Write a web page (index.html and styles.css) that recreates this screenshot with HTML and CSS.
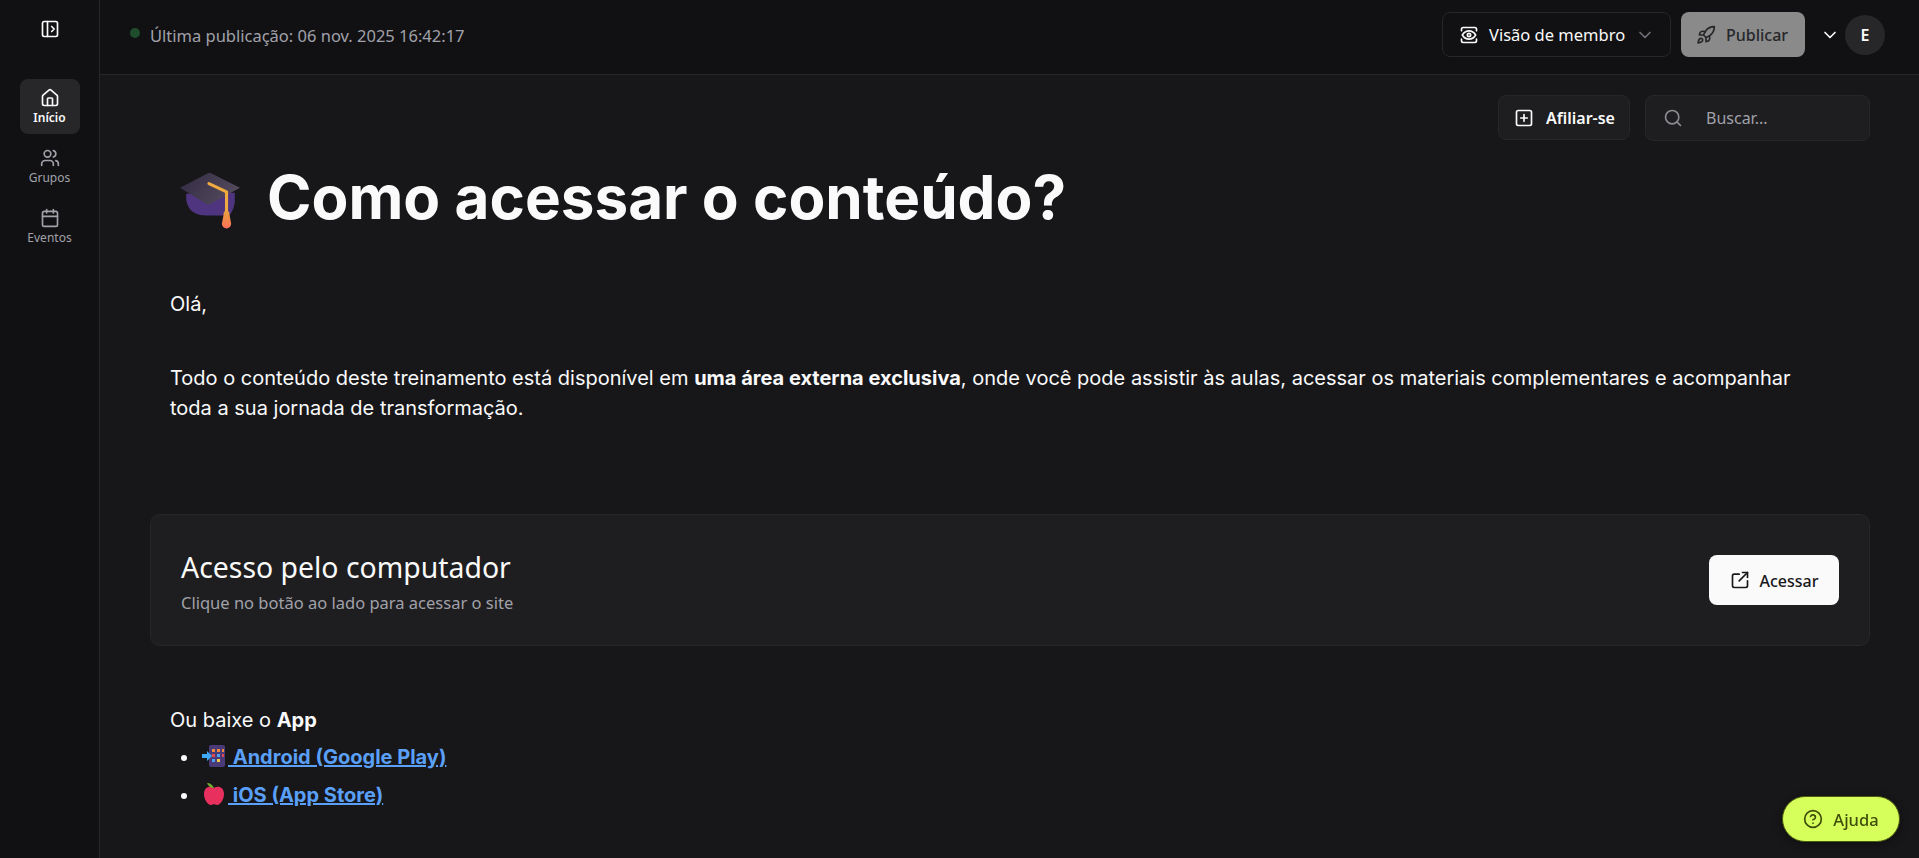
FILE: index.html
```html
<!DOCTYPE html>
<html lang="pt-BR">
<head>
  <meta charset="UTF-8">
  <title>Como acessar o conteúdo?</title>
  <link rel="stylesheet" href="styles.css">
</head>
<body>
  <div class="app">
    <aside class="sidebar">
      <button class="toggle" aria-label="Abrir menu">
        <svg class="icon" viewBox="0 0 24 24"><rect x="3" y="3" width="18" height="18" rx="2"/><path d="M9 3v18"/><path d="m14 9 3 3-3 3"/></svg>
      </button>
      <nav class="nav">
        <a class="nav-item active">
          <svg class="icon" viewBox="0 0 24 24"><path d="M15 21v-8a1 1 0 0 0-1-1h-4a1 1 0 0 0-1 1v8"/><path d="M3 10a2 2 0 0 1 .709-1.528l7-5.999a2 2 0 0 1 2.582 0l7 5.999A2 2 0 0 1 21 10v9a2 2 0 0 1-2 2H5a2 2 0 0 1-2-2z"/></svg>
          <span>Início</span>
        </a>
        <a class="nav-item">
          <svg class="icon" viewBox="0 0 24 24"><path d="M16 21v-2a4 4 0 0 0-4-4H6a4 4 0 0 0-4 4v2"/><circle cx="9" cy="7" r="4"/><path d="M22 21v-2a4 4 0 0 0-3-3.87"/><path d="M16 3.13a4 4 0 0 1 0 7.75"/></svg>
          <span>Grupos</span>
        </a>
        <a class="nav-item">
          <svg class="icon" viewBox="0 0 24 24"><path d="M8 2v4"/><path d="M16 2v4"/><rect x="3" y="4" width="18" height="18" rx="2"/><path d="M3 10h18"/></svg>
          <span>Eventos</span>
        </a>
      </nav>
    </aside>

    <div class="page">
      <header class="topbar">
        <div class="status">
          <span class="status-dot"></span>
          <span>Última publicação: 06 nov. 2025 16:42:17</span>
        </div>
        <div class="top-actions">
          <button class="btn-view">
            <svg class="icon" viewBox="0 0 24 24"><path d="M3 7V5a2 2 0 0 1 2-2h14a2 2 0 0 1 2 2v2"/><path d="M3 17v2a2 2 0 0 0 2 2h14a2 2 0 0 0 2-2v-2"/><path d="M4 12s3-5 8-5 8 5 8 5-3 5-8 5-8-5-8-5z"/><circle cx="12" cy="12" r="2"/></svg>
            <span>Visão de membro</span>
            <svg class="icon chevron-dim" viewBox="0 0 24 24"><path d="m6 9 6 6 6-6"/></svg>
          </button>
          <button class="btn-publish">
            <svg class="icon" viewBox="0 0 24 24"><path d="M4.500 16.500c-1.500 1.260-2 5-2 5s3.740-.5 5-2c.71-.84.7-2.130-.09-2.910a2.180 2.180 0 0 0-2.910-.09z"/><path d="m12 15-3-3a22 22 0 0 1 2-3.950A12.880 12.880 0 0 1 22 2c0 2.720-.78 7.500-6 11a22.350 22.350 0 0 1-4 2z"/><path d="M9 12H4s.55-3.030 2-4c1.620-1.080 5 0 5 0"/><path d="M12 15v5s3.030-.55 4-2c1.080-1.620 0-5 0-5"/></svg>
            <span>Publicar</span>
          </button>
          <svg class="icon chevron" viewBox="0 0 24 24"><path d="m6 9 6 6 6-6"/></svg>
          <div class="avatar">E</div>
        </div>
      </header>

      <main class="content">
        <div class="tools">
          <button class="btn-join">
            <svg class="icon" viewBox="0 0 24 24"><rect x="3" y="3" width="18" height="18" rx="2"/><path d="M8 12h8"/><path d="M12 8v8"/></svg>
            <span>Afiliar-se</span>
          </button>
          <div class="search">
            <svg class="icon" viewBox="0 0 24 24"><circle cx="11" cy="11" r="8"/><path d="m21 21-4.300-4.300"/></svg>
            <span>Buscar...</span>
          </div>
        </div>

        <h1 class="title">
          <svg class="cap" viewBox="0 0 60 60">
            <defs>
              <linearGradient id="capTop" x1="0" y1="0" x2="1" y2="0.4">
                <stop offset="0" stop-color="#322a42"/>
                <stop offset="1" stop-color="#52495c"/>
              </linearGradient>
              <linearGradient id="tassel" x1="0" y1="0" x2="0" y2="1">
                <stop offset="0" stop-color="#e8a03c"/>
                <stop offset="1" stop-color="#fb6f5c"/>
              </linearGradient>
            </defs>
            <path d="M7 26v6c2 11 9 15 20 15h22c3-5 5-9 5-15v-7z" fill="#4f3580"/>
            <path d="M1 20 28 6a3 3 0 0 1 3 0l28 14-29 16a3 3 0 0 1-3 0z" fill="url(#capTop)"/>
            <path d="M29 16l17 8v19" fill="none" stroke="#eeaa40" stroke-width="3" stroke-linecap="round" stroke-linejoin="round"/>
            <path d="M43.500 43h5l.5 4 1.500 8a4.500 4.500 0 0 1-9 0l1.500-8z" fill="url(#tassel)"/>
          </svg>
          <span>Como acessar o conteúdo?</span>
        </h1>

        <div class="text">
          <p class="hello">Olá,</p>
          <p class="intro">Todo o conteúdo deste treinamento está disponível em <strong>uma área externa exclusiva</strong>, onde você pode assistir às aulas, acessar os materiais complementares e acompanhar toda a sua jornada de transformação.</p>
        </div>

        <section class="card">
          <div>
            <h2>Acesso pelo computador</h2>
            <p>Clique no botão ao lado para acessar o site</p>
          </div>
          <button class="btn-access">
            <svg class="icon" viewBox="0 0 24 24"><path d="M21 13v6a2 2 0 0 1-2 2H5a2 2 0 0 1-2-2V7a2 2 0 0 1 2-2h6"/><path d="m11 13 10-10"/><path d="M15 3h6v6"/></svg>
            <span>Acessar</span>
          </button>
        </section>

        <div class="text app-links">
          <p>Ou baixe o <strong>App</strong></p>
          <ul>
            <li><a href="#"><svg class="emoji" viewBox="0 0 24 24"><rect x="7" y="1" width="16" height="22" rx="2" fill="#4b3a78"/><path d="M10 5h3v3h-3zM15 5h3v3h-3zM20 5h2v3h-2z" fill="#f0883e"/><path d="M10 10h3v3h-3zM20 10h2v3h-2z" fill="#e5484d"/><path d="M15 10h3v3h-3zM10 15h3v3h-3z" fill="#4ea1f3"/><path d="M15 15h3v3h-3z" fill="#f2c744"/><path d="M0 10h5V7l5 5-5 5v-3H0z" fill="#3fa9f5"/></svg> Android (Google Play)</a></li>
            <li><a href="#"><svg class="emoji" viewBox="0 0 24 24"><path d="M12 6C8 3 2 5 2 12c0 6 4 11 7 11 1.500 0 2-.7 3-.7s1.500.7 3 .7c3 0 7-5 7-11 0-7-6-9-10-6z" fill="#e8305f"/><path d="M12 6C11 3 8 1 5 1c1 3 4 5 7 5z" fill="#6cae2e"/></svg> iOS (App Store)</a></li>
          </ul>
        </div>
      </main>
    </div>
  </div>

  <button class="btn-help">
    <svg class="icon" viewBox="0 0 24 24"><circle cx="12" cy="12" r="10"/><path d="M9.090 9a3 3 0 0 1 5.830 1c0 2-3 3-3 3"/><path d="M12 17h.01"/></svg>
    <span>Ajuda</span>
  </button>
</body>
</html>
```

FILE: styles.css
```css
* {
  box-sizing: border-box;
}

html, body {
  height: 100%;
}

body {
  margin: 0;
  overflow: hidden;
  background: #17171a;
  color: #fafafa;
  font-family: "Noto Sans", sans-serif;
}

button {
  font-family: inherit;
  cursor: pointer;
  white-space: nowrap;
}

.icon {
  width: 20px;
  height: 20px;
  flex: none;
  fill: none;
  stroke: currentColor;
  stroke-width: 2;
  stroke-linecap: round;
  stroke-linejoin: round;
}

.app {
  display: flex;
  height: 100%;
}

/* sidebar */
.sidebar {
  width: 100px;
  flex: none;
  background: #111113;
  border-right: 1px solid #27272a;
  display: flex;
  flex-direction: column;
  align-items: center;
}

.toggle {
  margin-top: 19px;
  width: 20px;
  height: 20px;
  padding: 0;
  background: none;
  border: none;
  color: #fafafa;
}

.nav {
  margin-top: 40px;
  display: flex;
  flex-direction: column;
  gap: 5px;
}

.nav-item {
  width: 60px;
  height: 55px;
  padding-top: 9px;
  border-radius: 8px;
  display: flex;
  flex-direction: column;
  align-items: center;
  gap: 2px;
  font-size: 12px;
  line-height: 16px;
  color: #a1a1aa;
}

.nav-item.active {
  background: #27272a;
  color: #fafafa;
  font-weight: 600;
}

/* top bar */
.page {
  flex: 1;
  min-width: 0;
  display: flex;
  flex-direction: column;
}

.topbar {
  height: 75px;
  flex: none;
  background: #111113;
  border-bottom: 1px solid #27272a;
  padding: 0 34px 5px 30px;
  display: flex;
  align-items: center;
  justify-content: space-between;
}

.status {
  display: flex;
  align-items: center;
  gap: 10px;
  margin-top: 2px;
  font-size: 16.500px;
  color: #a1a1aa;
}

.status-dot {
  width: 10px;
  height: 10px;
  margin-top: -5px;
  border-radius: 50%;
  background: #1f4d2e;
}

.top-actions {
  display: flex;
  align-items: center;
}

.btn-view {
  width: 229px;
  height: 45px;
  padding: 0 16px;
  background: #111113;
  border: 1px solid #27272a;
  border-radius: 8px;
  color: #fafafa;
  font-size: 16.500px;
  display: flex;
  align-items: center;
  gap: 10px;
}

.chevron-dim {
  color: #71717a;
}

.btn-publish {
  width: 124px;
  height: 45px;
  margin-left: 10px;
  padding: 0 15px;
  background: #8a8a8a;
  border: none;
  border-radius: 8px;
  color: #27272a;
  font-size: 16px;
  font-weight: 500;
  display: flex;
  align-items: center;
  gap: 10px;
}

.chevron {
  margin-left: 15px;
  color: #fafafa;
}

.avatar {
  width: 40px;
  height: 40px;
  margin-left: 5px;
  border-radius: 50%;
  background: #27272a;
  display: flex;
  align-items: center;
  justify-content: center;
  font-size: 16px;
  font-weight: 600;
}

/* content */
.content {
  flex: 1;
  min-height: 0;
  padding: 20px 49px 0 50px;
}

.tools {
  display: flex;
  justify-content: flex-end;
  gap: 15px;
}

.btn-join {
  width: 132px;
  height: 45px;
  padding: 0 15px;
  background: #1e1e20;
  border: 1px solid #27272a;
  border-radius: 8px;
  color: #fafafa;
  font-size: 16px;
  font-weight: 600;
  display: flex;
  align-items: center;
  gap: 12px;
}

.search {
  width: 225px;
  height: 46px;
  padding: 0 17px;
  background: #1e1e20;
  border: 1px solid #27272a;
  border-radius: 8px;
  color: #a1a1aa;
  font-size: 16px;
  display: flex;
  align-items: center;
  gap: 23px;
}

.search .icon {
  color: #8a8a90;
}

.title {
  margin: 17px 0 0 29px;
  height: 80px;
  display: flex;
  align-items: center;
  gap: 26px;
  font-family: "Inter", sans-serif;
  font-size: 60.200px;
  font-weight: 700;
  line-height: 80px;
}

.cap {
  width: 62px;
  height: 62px;
  flex: none;
}

.text {
  margin-left: 20px;
  margin-right: 20px;
  font-family: "Inter", sans-serif;
  font-size: 20px;
  line-height: 30px;
}

.text p {
  margin: 0;
}

.text strong {
  font-weight: 700;
}

.hello {
  padding-top: 51px;
}

.text .intro {
  margin-top: 44px;
  margin-right: 40px;
}

.card {
  margin-top: 91px;
  height: 132px;
  padding: 0 30px;
  background: #1e1e20;
  border: 1px solid #27272a;
  border-radius: 10px;
  display: flex;
  align-items: center;
  justify-content: space-between;
}

.card h2 {
  margin: 0 0 3px;
  font-size: 28.400px;
  font-weight: 400;
  line-height: 38px;
}

.card p {
  margin: 6px 0 -1px;
  font-size: 16.500px;
  line-height: 22px;
  color: #a1a1aa;
}

.btn-access {
  width: 130px;
  height: 50px;
  padding: 2px 0 0;
  background: #fafafa;
  border: none;
  border-radius: 8px;
  color: #18181b;
  font-size: 16px;
  font-weight: 500;
  display: flex;
  align-items: center;
  justify-content: center;
  gap: 10px;
}

.btn-access .icon {
  margin-top: -2px;
}

.app-links {
  margin-top: 59px;
}

.app-links ul {
  margin: 4px 0 0;
  padding: 0 0 0 30px;
}

.app-links li {
  line-height: 37.500px;
}

.app-links a {
  color: #5aa0f8;
  font-weight: 700;
}

.emoji {
  width: 28px;
  height: 24px;
  vertical-align: -4px;
}

.btn-help {
  position: fixed;
  right: 19px;
  bottom: 16px;
  width: 118px;
  height: 46px;
  background: #d6ff5c;
  border: 1px solid #4a5a10;
  border-radius: 23px;
  color: #3f4d0a;
  font-size: 16.500px;
  font-weight: 500;
  display: flex;
  align-items: center;
  justify-content: center;
  gap: 10px;
  box-shadow: 0 2px 8px rgba(0,0,0,0.4);
}
```
